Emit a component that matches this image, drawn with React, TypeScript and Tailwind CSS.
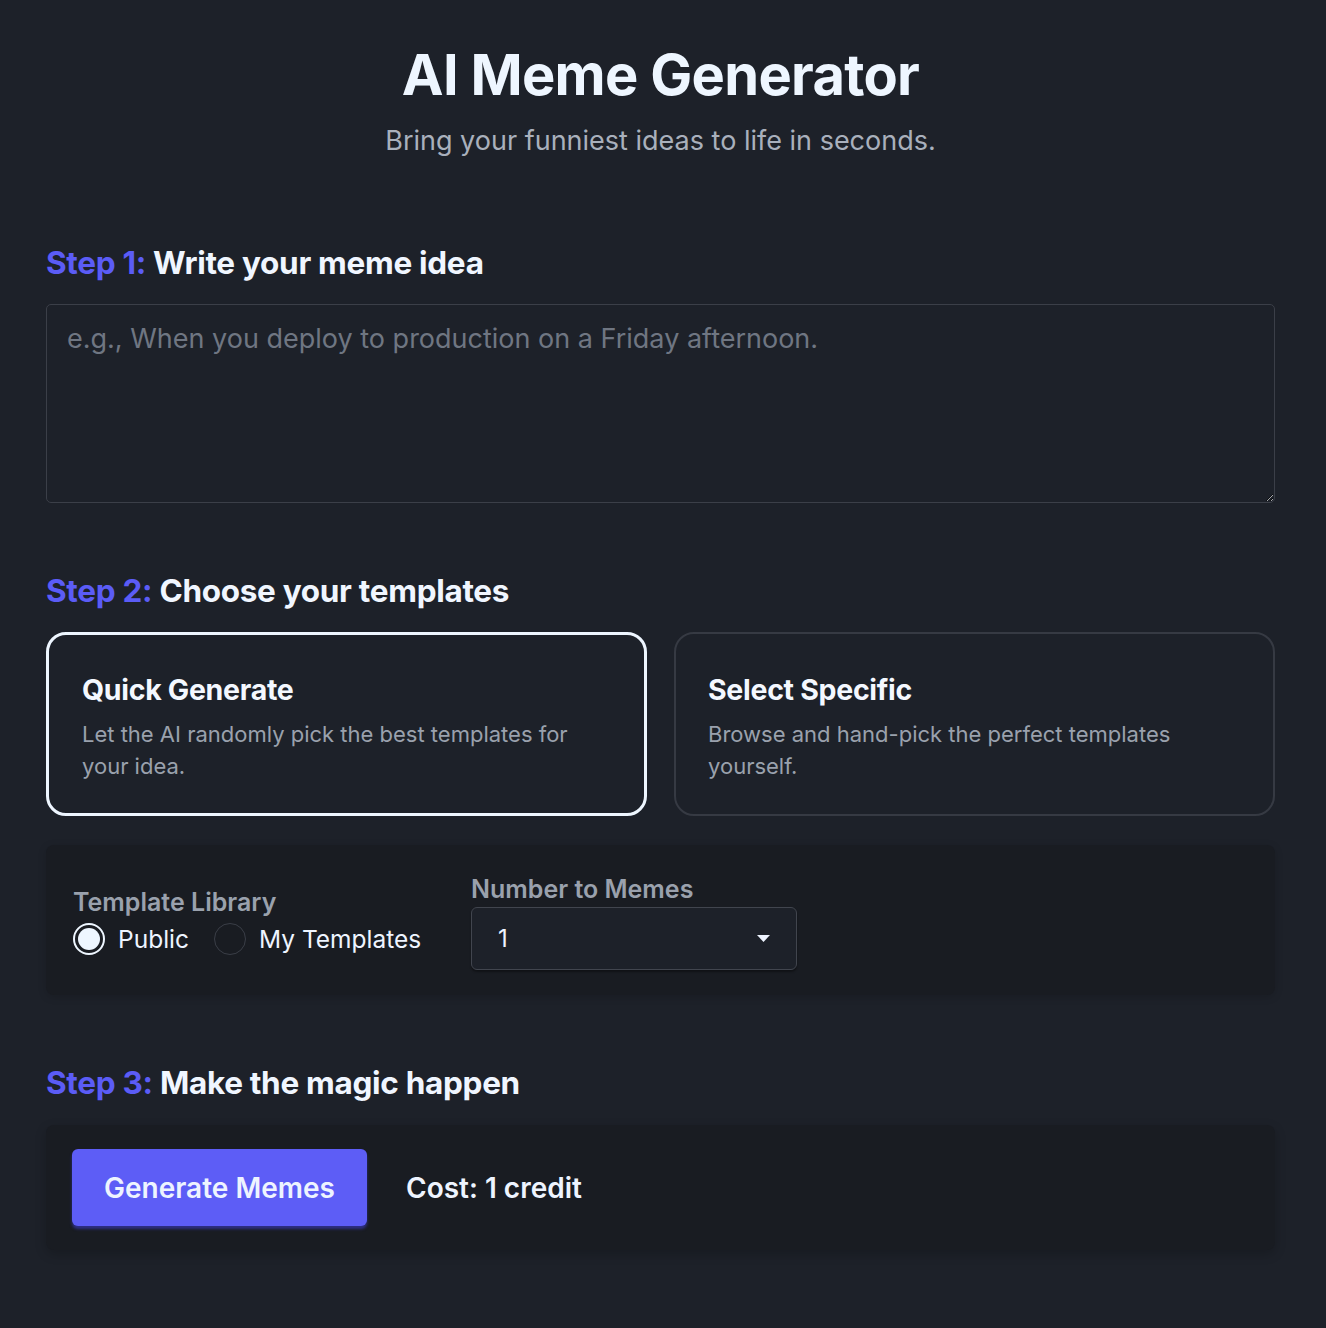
import React, { useState } from "react";

export default function App() {
  const [lib, setLib] = useState("public");
  return (
    <div
      className="min-h-[1328px] w-full bg-[#1d2129] text-[#eef4ff]"
      style={{ fontFamily: "Inter, 'Noto Sans', sans-serif" }}
    >
      <div className="ml-[46px] w-[1229px] pt-[41px] pb-[60px]">
        <h1 className="text-center text-[56px] leading-[68px] font-bold tracking-[-0.7px] text-[#eef6ff]">
          AI Meme Generator
        </h1>
        <p className="mt-[12px] text-center text-[27px] leading-[40px] text-[#a9b0bc]">
          Bring your funniest ideas to life in seconds.
        </p>

        <h2 className="mt-[82px] text-[31.5px] leading-[40px] font-bold tracking-[-0.3px]">
          <span className="text-[#5b5cf6]">Step 1:</span>{" "}
          <span className="text-[#f0f6ff]">Write your meme idea</span>
        </h2>
        <textarea
          className="mt-[21px] block h-[199px] w-full resize-y rounded-[5px] border border-[#3b3f48] bg-[#1d2129] px-[20px] pt-[14px] text-[27px] leading-[40px] text-[#eef4ff] outline-none placeholder:text-[#6f7682]"
          placeholder="e.g., When you deploy to production on a Friday afternoon."
        />

        <h2 className="mt-[68px] text-[31.5px] leading-[40px] font-bold tracking-[-0.3px]">
          <span className="text-[#5b5cf6]">Step 2:</span>{" "}
          <span className="text-[#f0f6ff]">Choose your templates</span>
        </h2>
        <div className="mt-[21px] grid grid-cols-2 gap-[27px]">
          <div className="h-[184px] rounded-[20px] border-[3px] border-[#eef6ff] px-[33px] pt-[37px]">
            <div className="text-[28.5px] leading-[36px] font-bold tracking-[-0.3px] text-[#f4f8ff]">
              Quick Generate
            </div>
            <p className="mt-[10px] max-w-[500px] text-[22px] leading-[32px] text-[#9aa1ad]">
              Let the AI randomly pick the best templates for your idea.
            </p>
          </div>
          <div className="h-[184px] rounded-[20px] border-2 border-[#363a43] px-[32px] pt-[38px]">
            <div className="text-[28.5px] leading-[36px] font-bold tracking-[-0.3px] text-[#f4f8ff]">
              Select Specific
            </div>
            <p className="mt-[10px] max-w-[500px] text-[22px] leading-[32px] text-[#9aa1ad]">
              Browse and hand-pick the perfect templates yourself.
            </p>
          </div>
        </div>

        <div className="mt-[29px] flex h-[150px] items-center rounded-[8px] bg-[#191c22] px-[27px] shadow-[0_2px_8px_rgba(0,0,0,0.15)]">
          <div className="flex w-[398px] flex-col pt-[2px]">
            <div className="text-[25px] leading-[30px] font-semibold text-[#9aa1ad]">
              Template Library
            </div>
            <div className="mt-[5px] flex items-center">
              <button
                onClick={() => setLib("public")}
                className="flex items-center gap-[13px]"
              >
                <span className="flex h-[32px] w-[32px] items-center justify-center rounded-full border-2 border-[#eef6ff]">
                  {lib === "public" && (
                    <span className="h-[22px] w-[22px] rounded-full bg-[#eef6ff]" />
                  )}
                </span>
                <span className="text-[24.5px] leading-[34px] text-[#eef4ff]">Public</span>
              </button>
              <button
                onClick={() => setLib("mine")}
                className="ml-[25px] flex items-center gap-[13px]"
              >
                <span
                  className={
                    lib === "mine"
                      ? "flex h-[32px] w-[32px] items-center justify-center rounded-full border-2 border-[#eef6ff]"
                      : "flex h-[32px] w-[32px] items-center justify-center rounded-full border border-[#3a3e47]"
                  }
                >
                  {lib === "mine" && (
                    <span className="h-[22px] w-[22px] rounded-full bg-[#eef6ff]" />
                  )}
                </span>
                <span className="text-[24.5px] leading-[34px] text-[#eef4ff]">My Templates</span>
              </button>
            </div>
          </div>
          <div className="flex flex-col pt-[4px]">
            <div className="text-[25px] leading-[30px] font-semibold text-[#9aa1ad]">
              Number to Memes
            </div>
            <div className="mt-[3px] flex h-[63px] w-[326px] items-center justify-between rounded-[6px] border border-[#41454e] bg-[#1d2129] pl-[26px] pr-[26px] shadow-[0_2px_2px_rgba(0,0,0,0.35)]">
              <span className="text-[24px] leading-[30px] text-[#eef4ff]">1</span>
              <svg width="13" height="8" viewBox="0 0 13 8">
                <path d="M0 0 L13 0 L6.5 7 Z" fill="#eef4ff" />
              </svg>
            </div>
          </div>
        </div>

        <h2 className="mt-[68px] text-[31.5px] leading-[40px] font-bold tracking-[-0.3px]">
          <span className="text-[#5b5cf6]">Step 3:</span>{" "}
          <span className="text-[#f0f6ff]">Make the magic happen</span>
        </h2>
        <div className="mt-[22px] flex h-[125px] items-center gap-[39px] rounded-[8px] bg-[#191c22] px-[26px] shadow-[0_4px_12px_rgba(0,0,0,0.2)]">
          <button className="h-[77px] w-[295px] rounded-[6px] bg-[#5d5df6] text-[28px] font-semibold text-[#eef4ff] shadow-[0_3px_3px_rgba(60,60,200,0.6)]">
            Generate Memes
          </button>
          <span className="text-[28px] leading-[36px] font-semibold text-[#eef4ff]">
            Cost: 1 credit
          </span>
        </div>
      </div>
    </div>
  );
}
